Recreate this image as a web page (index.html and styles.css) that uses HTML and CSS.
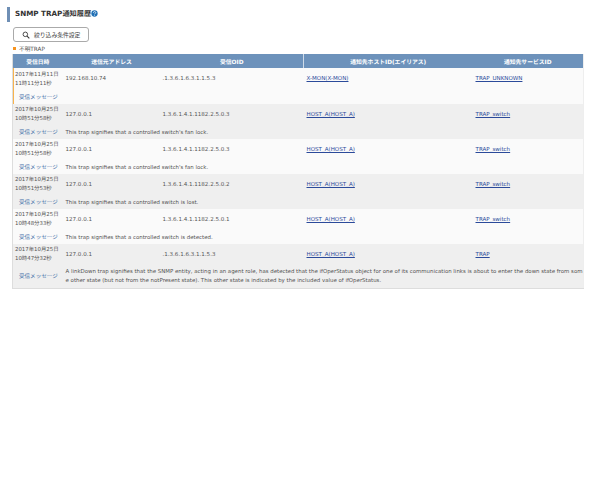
FILE: index.html
```html
<!DOCTYPE html>
<html lang="ja">
<head>
<meta charset="utf-8">
<title>SNMP TRAP通知履歴</title>
<link rel="stylesheet" href="styles.css">
</head>
<body>
<main class="page">
  <h1 class="title">SNMP TRAP通知履歴<svg class="help" viewBox="0 0 10 10" aria-hidden="true"><circle cx="5" cy="5" r="4.5" fill="#1f6fb5"/><path d="M3.4 3.9C3.5 2.8 4.2 2.3 5.1 2.3 6.1 2.3 6.8 2.9 6.8 3.7 6.8 4.9 5.2 4.9 5.2 6.1" fill="none" stroke="#fff" stroke-width="1.1"/><circle cx="5.2" cy="7.6" r=".7" fill="#fff"/></svg></h1>
  <button class="filter" type="button"><svg class="search" viewBox="0 0 12 12" aria-hidden="true"><circle cx="5" cy="5" r="3.4" fill="none" stroke="#333" stroke-width="1.3"/><path d="M7.6 7.6 11 11" stroke="#333" stroke-width="1.6"/></svg>絞り込み条件設定</button>
  <p class="legend"><span class="mark"></span>不明TRAP</p>
  <table class="traps">
    <colgroup><col class="c1"><col class="c2"><col class="c3"><col class="c4"><col class="c5"></colgroup>
    <thead><tr><th>受信日時</th><th>送信元アドレス</th><th>受信OID</th><th class="split">通知先ホストID(エイリアス)</th><th>通知先サービスID</th></tr></thead>
    <tbody>
      <tr class="odd unknown first"><td class="date">2017年11月11日<br>11時11分11秒</td><td>192.168.10.74</td><td class="oid">.1.3.6.1.6.3.1.1.5.3</td><td><a href="#">X-MON(X-MON)</a></td><td class="svc"><a href="#">TRAP_UNKNOWN</a></td></tr>
      <tr class="odd unknown"><td class="label">受信メッセージ</td><td class="msg" colspan="4"></td></tr>
      <tr class="even"><td class="date">2017年10月25日<br>10時51分58秒</td><td>127.0.0.1</td><td class="oid">1.3.6.1.4.1.1182.2.5.0.3</td><td><a href="#">HOST_A(HOST_A)</a></td><td class="svc"><a href="#">TRAP_switch</a></td></tr>
      <tr class="even"><td class="label">受信メッセージ</td><td class="msg" colspan="4">This trap signifies that a controlled switch's fan lock.</td></tr>
      <tr class="odd"><td class="date">2017年10月25日<br>10時51分58秒</td><td>127.0.0.1</td><td class="oid">1.3.6.1.4.1.1182.2.5.0.3</td><td><a href="#">HOST_A(HOST_A)</a></td><td class="svc"><a href="#">TRAP_switch</a></td></tr>
      <tr class="odd"><td class="label">受信メッセージ</td><td class="msg" colspan="4">This trap signifies that a controlled switch's fan lock.</td></tr>
      <tr class="even"><td class="date">2017年10月25日<br>10時51分53秒</td><td>127.0.0.1</td><td class="oid">1.3.6.1.4.1.1182.2.5.0.2</td><td><a href="#">HOST_A(HOST_A)</a></td><td class="svc"><a href="#">TRAP_switch</a></td></tr>
      <tr class="even"><td class="label">受信メッセージ</td><td class="msg" colspan="4">This trap signifies that a controlled switch is lost.</td></tr>
      <tr class="odd"><td class="date">2017年10月25日<br>10時48分33秒</td><td>127.0.0.1</td><td class="oid">1.3.6.1.4.1.1182.2.5.0.1</td><td><a href="#">HOST_A(HOST_A)</a></td><td class="svc"><a href="#">TRAP_switch</a></td></tr>
      <tr class="odd"><td class="label">受信メッセージ</td><td class="msg" colspan="4">This trap signifies that a controlled switch is detected.</td></tr>
      <tr class="even"><td class="date">2017年10月25日<br>10時47分32秒</td><td>127.0.0.1</td><td class="oid">.1.3.6.1.6.3.1.1.5.3</td><td><a href="#">HOST_A(HOST_A)</a></td><td class="svc"><a href="#">TRAP</a></td></tr>
      <tr class="even"><td class="label last">受信メッセージ</td><td class="msg" colspan="4">A linkDown trap signifies that the SNMP entity, acting in an agent role, has detected that the ifOperStatus object for one of its communication links is about to enter the down state from some other state (but not from the notPresent state). This other state is indicated by the included value of ifOperStatus.</td></tr>
    </tbody>
  </table>
</main>
</body>
</html>
```

FILE: styles.css
```css
* { box-sizing: border-box; }
html, body { margin: 0; background: #fff; }
body { font-family: "DejaVu Sans", "Noto Sans CJK JP", sans-serif; font-size: 5.55px; color: #555; text-rendering: geometricPrecision; }
.page { width: 600px; height: 480px; padding: 7px 16px 0 12px; }
.title { display: flex; align-items: center; height: 15px; margin: 0 0 0 -5px; padding: 0 0 2px 5px; border-left: 3px solid #6f8fb5; font-size: 7.2px; font-weight: bold; color: #333; }
.help { width: 7px; height: 7px; }
.filter { display: flex; align-items: center; gap: 4px; width: 76px; height: 15px; margin: 5px 0 0 1px; padding: 0 0 0 8px; background: #fff; border: 1px solid #aaa; border-radius: 3px; font: inherit; font-size: 5.8px; color: #444; }
.search { width: 8px; height: 8px; }
.legend { display: flex; align-items: center; gap: 3px; height: 7px; margin: 3px 0 0 1px; font-size: 5.7px; }
.mark { width: 3px; height: 3px; background: #f7931e; }
.traps { width: 571px; margin-top: 2px; border-collapse: collapse; table-layout: fixed; border-bottom: 1px solid #ddd; border-right: 1px solid #eee; border-left: 1px solid #ddd; }
.c1 { width: 50px; } .c2 { width: 98px; } .c3 { width: 143px; } .c4 { width: 169px; } .c5 { width: 111px; }
th { height: 14px; padding: 0; background: #6d92bb; color: #fff; font-size: 5.8px; font-weight: bold; text-align: center; }
.split { border-left: 1px solid #cfdbe8; }
td { padding: 0 0 0 3px; line-height: 9px; vertical-align: middle; }
.odd td { background: #fafafa; }
.even td { background: #efefef; }
.date { height: 22px; padding-left: 2px; font-size: 5.4px; }
.first .date { height: 23px; }
.oid { padding-left: 2px; }
.label { height: 13px; padding: 1px 0 0 6px; color: #3f6fa8; }
.last { height: 22px; }
.msg { padding: 1px 0 0 3px; font-size: 5.43px; word-break: break-all; }
.unknown td:first-child { box-shadow: inset 1px 0 #f7b34d; }
a { color: #2b4a9a; }
```
